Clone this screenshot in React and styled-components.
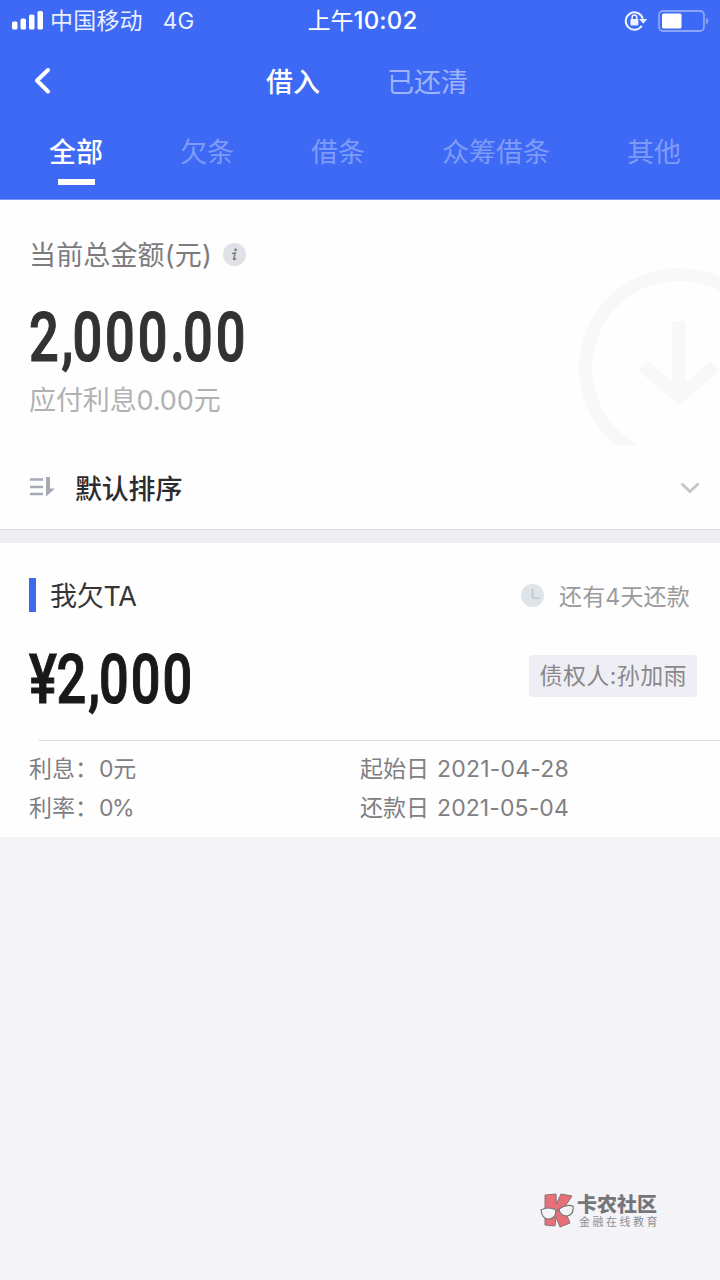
import React from 'react';
import styled, { createGlobalStyle } from 'styled-components';

const GlobalStyle = createGlobalStyle`
  * { box-sizing: border-box; }
  body {
    margin: 0;
    background: #f3f3f8;
    font-family: Inter, "Noto Sans CJK SC", sans-serif;
    color: #313133;
  }
`;

const Screen = styled.main`
  width: 720px;
  height: 1280px;
  overflow: hidden;
  display: flex;
  flex-direction: column;
  background: #f3f3f8;
  white-space: nowrap;
`;

const Header = styled.header`
  height: 200px;
  flex: none;
  background: #3e69f4;
  border-bottom: 1px solid #7896f5;
  color: #fff;
`;

const StatusBar = styled.div`
  height: 40px;
  display: grid;
  grid-template-columns: 1fr auto 1fr;
  align-items: center;
  padding: 0 11px 0 12px;
  font-size: 23px;
  line-height: 40px;
`;

const Carrier = styled.div`
  display: flex;
  align-items: center;
  padding-top: 1px;
  letter-spacing: 0.2px;
  color: #e9effe;
`;

const Signal = styled.svg`
  margin-right: 6px;
`;

const Network = styled.span`
  margin-left: 20px;
  font-size: 22.5px;
`;

const Clock = styled.div`
  padding: 1px 0 0 4px;
  font-weight: 400;
  b {
    font-size: 24px;
    font-weight: 500;
    letter-spacing: 0.2px;
  }
`;

const StatusIcons = styled.div`
  display: flex;
  align-items: center;
  justify-content: flex-end;
  gap: 10px;
`;

const NavBar = styled.nav`
  height: 81px;
  display: flex;
  align-items: center;
  padding-left: 32px;
  font-size: 27px;
`;

const BackIcon = styled.svg`
  margin-right: 215px;
`;

const NavTitle = styled.span`
  margin-right: 67px;
  font-weight: ${(p) => (p.$active ? 500 : 400)};
  color: ${(p) => (p.$active ? '#fff' : '#9eb4fa')};
`;

const Tabs = styled.div`
  display: flex;
  justify-content: space-between;
  padding: 11px 39px 0 49px;
`;

const Tab = styled.div`
  display: flex;
  flex-direction: column;
  align-items: center;
  font-size: 27px;
  line-height: 42px;
  font-weight: ${(p) => (p.$active ? 500 : 400)};
  color: ${(p) => (p.$active ? '#fff' : '#7f9bf8')};
  &::after {
    content: '';
    width: 37px;
    height: 6px;
    margin-top: 5px;
    background: ${(p) => (p.$active ? '#fff' : 'transparent')};
  }
`;

const Summary = styled.section`
  height: 245px;
  flex: none;
  display: flex;
  justify-content: space-between;
  padding-left: 29px;
  background: #fefefe;
`;

const SummaryText = styled.div`
  padding-top: 37px;
`;

const SummaryLabel = styled.div`
  display: flex;
  align-items: center;
  gap: 11px;
  height: 38px;
  font-size: 27px;
  line-height: 38px;
  letter-spacing: 0.15px;
  color: #7c7c7e;
  svg {
    margin-bottom: 4px;
  }
`;

const Amount = styled.div`
  font-family: Roboto, sans-serif;
  font-size: 68px;
  font-weight: 500;
  line-height: 80px;
  letter-spacing: ${(p) => p.$tracking}px;
  transform: scaleX(0.77);
  transform-origin: left center;
  -webkit-text-stroke: 1.2px currentColor;
  color: ${(p) => p.$color};
`;

const Mark = styled.span`
  letter-spacing: ${(p) => p.$tracking}px;
`;

const SummaryAmount = styled.div`
  width: 215px;
  margin-top: 23px;
  height: 80px;
`;

const InterestDue = styled.div`
  margin-top: 3px;
  font-size: 27px;
  line-height: 40px;
  letter-spacing: -0.1px;
  color: #b1b1b3;
`;

const Watermark = styled.svg`
  margin-top: 62px;
  flex: none;
`;

const SortRow = styled.section`
  height: 85px;
  flex: none;
  display: flex;
  align-items: center;
  padding: 0 20px 0 29px;
  background: #fefefe;
  border-bottom: 1px solid #dcdce2;
`;

const SortLabel = styled.span`
  flex: 1;
  margin-left: 20px;
  font-size: 27px;
  font-weight: 500;
  letter-spacing: -0.2px;
  color: #2c2c2e;
`;

const Chevron = styled.svg`
  margin-top: 2px;
`;

const Divider = styled.div`
  height: 13px;
  flex: none;
  background: #efeef4;
`;

const Card = styled.section`
  height: 294px;
  flex: none;
  background: #fefefe;
`;

const CardHead = styled.div`
  height: 104px;
  display: flex;
  align-items: center;
  padding: 0 30px 0 29px;
`;

const Accent = styled.i`
  width: 7px;
  height: 34px;
  margin-right: 14px;
  background: #3e69ee;
`;

const CardTitle = styled.span`
  flex: 1;
  padding-bottom: 2px;
  font-size: 27px;
  color: #353537;
  letter-spacing: -0.3px;
`;

const DueText = styled.span`
  margin-left: 15px;
  padding-bottom: 1px;
  font-size: 23px;
  letter-spacing: 0.2px;
  color: #9b9b9d;
`;

const CardAmountRow = styled.div`
  height: 93px;
  display: flex;
  align-items: flex-start;
  justify-content: space-between;
  padding: 0 23px 0 29px;
`;

const CardAmount = styled.div`
  width: 170px;
  margin-top: -7px;
`;

const Creditor = styled.span`
  height: 42px;
  margin-top: 8px;
  padding: 0 10px 0 11px;
  border-radius: 4px;
  background: #efeef4;
  font-size: 23px;
  line-height: 43px;
  letter-spacing: 0.4px;
  color: #88888c;
`;

const Details = styled.div`
  display: grid;
  grid-template-columns: 331px 1fr;
  grid-auto-rows: 39px;
  padding: 10px 0 0 29px;
  position: relative;
  font-size: 23px;
  line-height: 39px;
  color: #808083;
  &::before {
    content: '';
    position: absolute;
    top: 0;
    left: 38px;
    right: 0;
    height: 1px;
    background: #e0e0e3;
  }
`;

const Detail = styled.div`
  display: flex;
`;

const DetailName = styled.span`
  width: ${(p) => p.$width}px;
`;

const DetailValue = styled.span`
  letter-spacing: ${(p) => p.$tracking}px;
`;

const Brand = styled.footer`
  display: flex;
  align-items: center;
  margin: auto 60px 51px auto;
`;

const BrandText = styled.div`
  display: flex;
  flex-direction: column;
  margin-left: 3px;
  padding-top: 1px;
`;

const BrandName = styled.strong`
  font-size: 20px;
  line-height: 22px;
  font-weight: 900;
  color: #76767a;
`;

const BrandSlogan = styled.span`
  padding-left: 2px;
  font-size: 11px;
  line-height: 12px;
  letter-spacing: 2.5px;
  color: #8f8f94;
`;

const TABS = ['全部', '欠条', '借条', '众筹借条', '其他'];

const DETAILS = [
  { name: '利息：', value: '0元', width: 70, tracking: -0.3 },
  { name: '起始日', value: '2021-04-28', width: 77, tracking: 0.2 },
  { name: '利率：', value: '0%', width: 70, tracking: -1.6 },
  { name: '还款日', value: '2021-05-04', width: 77, tracking: 0.1 },
];

export default function App() {
  return (
    <Screen>
      <GlobalStyle />
      <Header>
        <StatusBar>
          <Carrier>
            <Signal width="32" height="20" fill="#fff">
              <rect x="0" y="10.5" width="5.5" height="8" rx="1.6" />
              <rect x="8.5" y="7.5" width="5.5" height="11" rx="1.6" />
              <rect x="17" y="3.5" width="5.5" height="15" rx="1.6" />
              <rect x="25.5" y="0" width="5.5" height="18.5" rx="1.6" />
            </Signal>
            中国移动<Network>4G</Network>
          </Carrier>
          <Clock>上午<b>10:02</b></Clock>
          <StatusIcons>
            <svg width="24" height="22" viewBox="0 0 24 22">
              <path d="M17.8 15.8A8.7 8.7 0 1 1 18.8 8.6" fill="none" stroke="#eef2ff" strokeWidth="2" />
              <path d="M15.2 9h8l-4 4.8z" fill="#eef2ff" />
              <rect x="6.4" y="9" width="8" height="6.4" rx="0.8" fill="#eef2ff" />
              <path d="M8.1 9V7.2a2.3 2.3 0 0 1 4.6 0V9" fill="none" stroke="#eef2ff" strokeWidth="1.5" />
            </svg>
            <svg width="51" height="22" viewBox="0 0 51 22">
              <rect x="1" y="1" width="45" height="20" rx="4" fill="none" stroke="#8ba5f9" strokeWidth="1.8" />
              <rect x="4" y="3.5" width="19.5" height="15" rx="1.5" fill="#fff" />
              <path d="M48 7.5q2.3 1 2.3 3.5T48 14.5z" fill="#8ba5f9" />
            </svg>
          </StatusIcons>
        </StatusBar>
        <NavBar>
          <BackIcon width="19" height="28" viewBox="0 0 19 28">
            <path d="M16 3L5 13.500L16 24.500" fill="none" stroke="#fff" strokeWidth="4" strokeLinecap="round" strokeLinejoin="round" />
          </BackIcon>
          <NavTitle $active>借入</NavTitle>
          <NavTitle>已还清</NavTitle>
        </NavBar>
        <Tabs>
          {TABS.map((name, i) => (
            <Tab key={name} $active={i === 0}>{name}</Tab>
          ))}
        </Tabs>
      </Header>

      <Summary>
        <SummaryText>
          <SummaryLabel>
            <span>当前总金额(元)</span>
            <svg width="23" height="23" viewBox="0 0 23 23">
              <circle cx="11.5" cy="11.5" r="11.5" fill="#dfe1e6" />
              <circle cx="12.6" cy="6.8" r="1.4" fill="#7d7f84" />
              <path d="M9 10.6l3.300-.6-1.700 6q-.3 1.400 2.600-.6" fill="none" stroke="#7d7f84" strokeWidth="1.500" />
            </svg>
          </SummaryLabel>
          <SummaryAmount>
            <Amount $tracking={3.7} $color="#323234">
              2<Mark $tracking={-1.2}>,</Mark>000<Mark $tracking={-2.2}>.</Mark>00
            </Amount>
          </SummaryAmount>
          <InterestDue>应付利息0.00元</InterestDue>
        </SummaryText>
        <Watermark width="142" height="183" viewBox="0 0 142 183">
          <circle cx="101" cy="106" r="93.500" fill="none" stroke="#f8f8f8" strokeWidth="13" />
          <path d="M101 59V134M65 104L101 134.500L137 104" fill="none" stroke="#f8f8f8" strokeWidth="13" />
        </Watermark>
      </Summary>

      <SortRow>
        <svg width="26" height="22" viewBox="0 0 26 22">
          <path d="M1 3.500h13M1 11h13M1 18h13" stroke="#a5aab4" strokeWidth="2.400" />
          <path d="M17 1h4v11.500h5L17 20.500z" fill="#a5aab4" />
        </svg>
        <SortLabel>默认排序</SortLabel>
        <Chevron width="20" height="14" viewBox="0 0 20 14">
          <path d="M1.500 2.500L10 10.500L18.500 2.500" fill="none" stroke="#c4c5c8" strokeWidth="2.800" />
        </Chevron>
      </SortRow>
      <Divider />

      <Card>
        <CardHead>
          <Accent />
          <CardTitle>我欠TA</CardTitle>
          <svg width="23" height="23" viewBox="0 0 23 23">
            <circle cx="11.500" cy="11.500" r="11.500" fill="#dee4e7" />
            <path d="M11.500 4.500V14H19" fill="none" stroke="#c2c9cd" strokeWidth="1.700" />
          </svg>
          <DueText>还有4天还款</DueText>
        </CardHead>
        <CardAmountRow>
          <CardAmount>
            <Amount $tracking={2.6} $color="#19191b">
              <Mark $tracking={-0.5}>¥</Mark>2<Mark $tracking={-1.2}>,</Mark>000
            </Amount>
          </CardAmount>
          <Creditor>债权人:孙加雨</Creditor>
        </CardAmountRow>
        <Details>
          {DETAILS.map((d) => (
            <Detail key={d.name}>
              <DetailName $width={d.width}>{d.name}</DetailName>
              <DetailValue $tracking={d.tracking}>{d.value}</DetailValue>
            </Detail>
          ))}
        </Details>
      </Card>

      <Brand>
        <svg width="34" height="37" viewBox="0 0 34 37">
          <path d="M5 3L16 2L16.500 12L21 2L32 4L24 16L30 31L20 35L16 25L15 34L5 33Z" fill="#e77078" stroke="#8b7279" strokeWidth="1" />
          <path d="M1 18Q8 14 16 18Q16 27 8.500 27Q2 27 1 18Z" fill="#f3f3f8" stroke="#777" strokeWidth="1.200" />
          <path d="M19 17Q26 12 33 14Q34 23 27 24Q20 24 19 17Z" fill="#f3f3f8" stroke="#777" strokeWidth="1.200" />
          <path d="M16 19L19 18" stroke="#777" strokeWidth="1.200" />
        </svg>
        <BrandText>
          <BrandName>卡农社区</BrandName>
          <BrandSlogan>金融在线教育</BrandSlogan>
        </BrandText>
      </Brand>
    </Screen>
  );
}
